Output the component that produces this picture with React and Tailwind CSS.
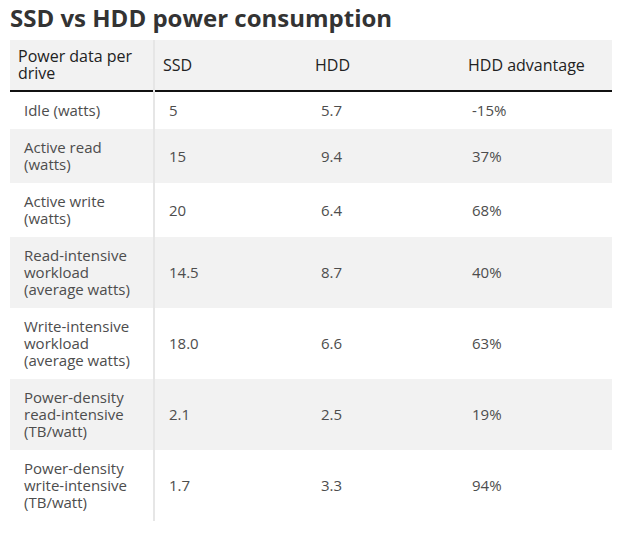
import React from "react";

const rows = [
  ["Idle (watts)", "5", "5.7", "-15%"],
  ["Active read\n(watts)", "15", "9.4", "37%"],
  ["Active write\n(watts)", "20", "6.4", "68%"],
  ["Read-intensive\nworkload\n(average watts)", "14.5", "8.7", "40%"],
  ["Write-intensive\nworkload\n(average watts)", "18.0", "6.6", "63%"],
  ["Power-density\nread-intensive\n(TB/watt)", "2.1", "2.5", "19%"],
  ["Power-density\nwrite-intensive\n(TB/watt)", "1.7", "3.3", "94%"],
];

export default function App() {
  return (
    <div className="bg-white w-[628px] h-[533px] px-[10px] pt-[3px] font-['Open_Sans',sans-serif]">
      <h1 className="text-[24px] leading-[30px] font-bold text-[#333333] mb-[7px]">
        SSD vs HDD power consumption
      </h1>
      <table className="w-[602px] table-fixed">
        <colgroup>
          <col className="w-[144px]" />
          <col className="w-[153px]" />
          <col className="w-[153px]" />
          <col className="w-[152px]" />
        </colgroup>
        <thead>
          <tr className="bg-[#f2f2f2] border-b-[2px] border-[#111111] text-left text-[16px] leading-[17px] text-[#222222]">
            <th className="h-[50px] px-2 py-2 font-medium align-middle border-r-[2px] border-r-[#e6e6e6]">
              Power data per drive
            </th>
            <th className="px-2 font-medium">SSD</th>
            <th className="px-2 font-medium">HDD</th>
            <th className="px-2 font-medium">HDD advantage</th>
          </tr>
        </thead>
        <tbody className="text-[15px] leading-[17px] text-[#4d4d4d]">
          {rows.map((r, i) => (
            <tr key={i} className={i % 2 === 1 ? "bg-[#f2f2f2]" : "bg-white"}>
              <td className="pl-[14px] pr-1 py-[10px] whitespace-pre-line align-middle border-r-[2px] border-r-[#e6e6e6]">
                {r[0]}
              </td>
              <td className="pl-[14px] align-middle">{r[1]}</td>
              <td className="pl-[14px] align-middle">{r[2]}</td>
              <td className="pl-[12px] align-middle">{r[3]}</td>
            </tr>
          ))}
        </tbody>
      </table>
    </div>
  );
}
